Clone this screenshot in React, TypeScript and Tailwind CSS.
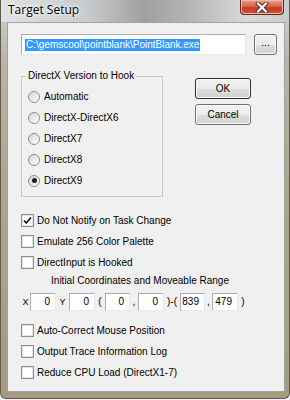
import React from "react";

function Radio({ label, checked }: { label: string; checked?: boolean }) {
  return (
    <div className="flex h-[21px] items-center pl-[6px]">
      <span className="flex h-[12px] w-[12px] items-center justify-center rounded-full border border-[#8e8f8f] bg-[linear-gradient(135deg,#d4d4d4,#ffffff)]">
        {checked && <span className="h-[5px] w-[5px] rounded-full bg-[#1c1c1c]" />}
      </span>
      <span className="ml-[4px]">{label}</span>
    </div>
  );
}

function Check({ label, checked }: { label: string; checked?: boolean }) {
  return (
    <div className="flex h-[21px] items-center">
      <span className="flex h-[13px] w-[13px] items-center justify-center border border-[#8e8f8f] bg-white shadow-[inset_0_0_0_1px_#e4e4e4]">
        {checked && (
          <svg width="11" height="11" viewBox="0 0 11 11">
            <path d="M2 5.5 L4.3 8 L9 2.5" fill="none" stroke="#1e1e1e" strokeWidth="1.8" />
          </svg>
        )}
      </span>
      <span className="ml-[3px]">{label}</span>
    </div>
  );
}

function Num({ v, w }: { v: string; w: string }) {
  return (
    <span
      className={`flex h-[18px] items-center justify-end border border-[#e3e9ef] border-l-[#abadb3] border-t-[#abadb3] bg-white pr-[5px] ${w}`}
    >
      {v}
    </span>
  );
}

function Btn({ label, def }: { label: string; def?: boolean }) {
  return (
    <button
      className={`flex h-[21px] w-[56px] items-center justify-center rounded-[3px] border bg-[linear-gradient(#f2f2f2,#ebebeb_50%,#dddddd_51%,#d2d2d2)] ${
        def ? "border-[#2e2e2e] shadow-[inset_0_0_0_1px_#f8f8f8]" : "border-[#707070] shadow-[inset_0_0_0_1px_#fbfbfb]"
      }`}
    >
      {label}
    </button>
  );
}

export default function App() {
  return (
    <div className="h-[400px] w-[290px] overflow-hidden bg-[#f3f3f3]">
      <div className="h-[399px] w-[290px] rounded-b-[6px] border-x border-b border-[#5f5a4e] bg-[linear-gradient(#cfd3d6_0px,#b9b6a6_60px,#aea68c_180px,#a49a7e_400px)]">
        <div className="flex h-[22px] items-start justify-between bg-[linear-gradient(90deg,#dfe2e5,#c9ccce_30%,#9fa0a0_50%,#b3b4b3_65%,#d6d9db_85%,#c7cbcd)]">
          <span className="pl-[7px] pt-[1px] font-['Open_Sans',sans-serif] text-[12px] leading-[18px] text-black [text-shadow:0_0_6px_#fff,0_0_3px_#fff]">
            Target Setup
          </span>
          <span className="mr-[5px] flex h-[15px] w-[44px] items-center justify-center rounded-b-[4px] border border-t-0 border-[#6a2316] bg-[linear-gradient(#e9a28f,#d7654b_45%,#c63b21_55%,#d2553a)] shadow-[inset_0_0_0_1px_#f0b8a8]">
            <svg width="14" height="11" viewBox="0 0 14 11">
              <path d="M3 1.5 L11 9.5 M11 1.5 L3 9.5" stroke="#4a2a26" strokeWidth="4" strokeLinecap="square" />
              <path d="M3 1.5 L11 9.5 M11 1.5 L3 9.5" stroke="#ffffff" strokeWidth="2.2" strokeLinecap="square" />
            </svg>
          </span>
        </div>
        <div className="ml-[6px] h-[370px] w-[278px] border border-[#9ea3a8] bg-[#f0f0f0] pl-[13px] pt-[11px] font-['Liberation_Sans',Arial,sans-serif] text-[10px] leading-[12px] text-black">
          <div className="flex">
            <div className="flex h-[21px] w-[225px] items-center border border-[#e3e9ef] border-l-[#abadb3] border-t-[#abadb3] bg-white pl-[3px]">
              <span className="bg-[#3399ff] px-[1px] leading-[12px] text-white">C:\gemscool\pointblank\PointBlank.exe</span>
            </div>
            <div className="ml-[8px]">
              <button className="flex h-[21px] w-[23px] items-center justify-center rounded-[3px] border border-[#707070] bg-[linear-gradient(#f2f2f2,#ebebeb_50%,#dddddd_51%,#d2d2d2)] pb-[3px] shadow-[inset_0_0_0_1px_#fbfbfb]">
                ...
              </button>
            </div>
          </div>

          <div className="mt-[15px] flex items-start">
            <fieldset className="m-0 w-[142px] border border-[#c6cace] p-0 pb-[5px]">
              <legend className="ml-[4px] px-[2px] leading-[12px]">DirectX Version to Hook</legend>
              <div className="pt-[4px]">
                <Radio label="Automatic" />
                <Radio label="DirectX-DirectX6" />
                <Radio label="DirectX7" />
                <Radio label="DirectX8" />
                <Radio label="DirectX9" checked />
              </div>
            </fieldset>
            <div className="ml-[32px] mt-[8px] flex flex-col gap-[5px]">
              <Btn label="OK" def />
              <Btn label="Cancel" />
            </div>
          </div>

          <div className="mt-[13px]">
            <Check label="Do Not Notify on Task Change" checked />
            <Check label="Emulate 256 Color Palette" />
            <Check label="DirectInput is Hooked" />
          </div>

          <div className="flex h-[16px] w-[238px] items-center justify-center">Initial Coordinates and Moveable Range</div>

          <div className="mt-[4px] flex h-[18px] items-center">
            <span className="w-[9px] text-center text-[9px]">X</span>
            <Num v="0" w="w-[26px]" />
            <span className="w-[13px] text-center text-[9px]">Y</span>
            <Num v="0" w="w-[26px]" />
            <span className="w-[10px] text-center">(</span>
            <Num v="0" w="w-[25px]" />
            <span className="w-[8px] text-center">,</span>
            <Num v="0" w="w-[26px]" />
            <span className="w-[16px] text-center">)-(</span>
            <Num v="839" w="w-[25px]" />
            <span className="w-[7px] text-center">,</span>
            <Num v="479" w="w-[26px]" />
            <span className="w-[10px] text-center">)</span>
          </div>

          <div className="mt-[9px]">
            <Check label="Auto-Correct Mouse Position" />
            <Check label="Output Trace Information Log" />
            <Check label="Reduce CPU Load (DirectX1-7)" />
          </div>
        </div>
      </div>
    </div>
  );
}
